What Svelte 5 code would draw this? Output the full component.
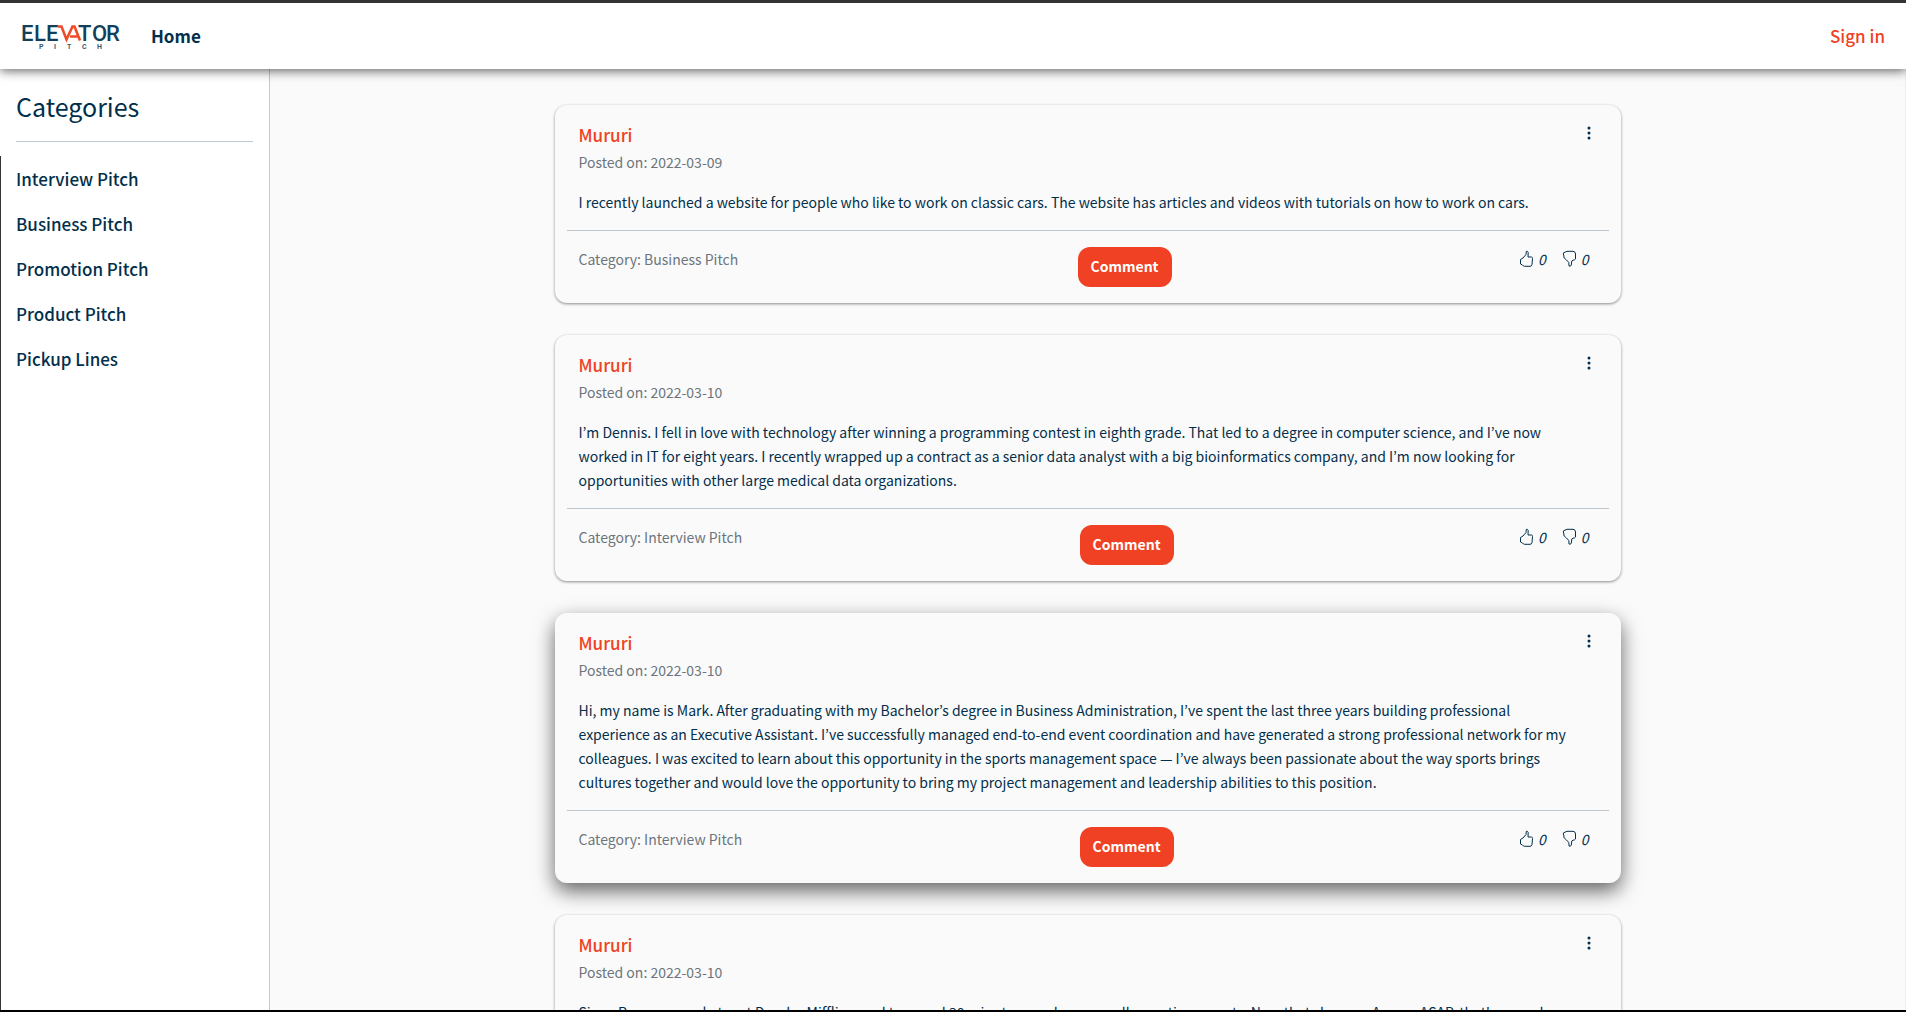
<script>
  const categories = ['Interview Pitch', 'Business Pitch', 'Promotion Pitch', 'Product Pitch', 'Pickup Lines'];

  const pitches = [
    {
      author: 'Mururi',
      date: '2022-03-09',
      category: 'Business Pitch',
      text: 'I recently launched a website for people who like to work on classic cars. The website has articles and videos with tutorials on how to work on cars.'
    },
    {
      author: 'Mururi',
      date: '2022-03-10',
      category: 'Interview Pitch',
      text: 'I’m Dennis. I fell in love with technology after winning a programming contest in eighth grade. That led to a degree in computer science, and I’ve now worked in IT for eight years. I recently wrapped up a contract as a senior data analyst with a big bioinformatics company, and I’m now looking for opportunities with other large medical data organizations.'
    },
    {
      author: 'Mururi',
      date: '2022-03-10',
      category: 'Interview Pitch',
      raised: true,
      text: 'Hi, my name is Mark. After graduating with my Bachelor’s degree in Business Administration, I’ve spent the last three years building professional experience as an Executive Assistant. I’ve successfully managed end-to-end event coordination and have generated a strong professional network for my colleagues. I was excited to learn about this opportunity in the sports management space — I’ve always been passionate about the way sports brings cultures together and would love the opportunity to bring my project management and leadership abilities to this position.'
    },
    {
      author: 'Mururi',
      date: '2022-03-10',
      category: 'Business Pitch',
      text: "Siena Rosen, a marketer at Dunder Mifflin, used to spend 30 minutes per day manually creating reports. Now that she uses AnswerASAP, that's gone down to five."
    }
  ];
</script>

<div class="page">
  <header>
    <a class="logo" href="#home" aria-label="Elevator Pitch">
      <svg width="112" height="40" viewBox="0 0 112 40">
        <text x="8 21 33" y="25">ELE</text>
        <text x="65 79 93" y="25">TOR</text>
        <path d="M45 10.500 H48.500 L53.500 23.500 L59.500 10.500 H61.500 L67 24.500 M57 20.500 H65" />
        <text class="sub" x="26 41 54 69 84" y="33">PITCH</text>
      </svg>
    </a>
    <a class="home" href="#home">Home</a>
    <a class="signin" href="#signin">Sign in</a>
  </header>

  <div class="columns">
    <aside>
      <h1>Categories</h1>
      <hr />
      <nav>
        {#each categories as category}
          <a href="#category">{category}</a>
        {/each}
      </nav>
    </aside>

    <main>
      <div class="feed">
        {#each pitches as pitch}
          <article class:raised={pitch.raised}>
            <div class="top">
              <h2>{pitch.author}</h2>
              <button class="dots" aria-label="More options">
                <svg width="16" height="16" viewBox="0 0 16 16">
                  <circle cx="8" cy="3" r="1.5" /><circle cx="8" cy="8" r="1.5" /><circle cx="8" cy="13" r="1.5" />
                </svg>
              </button>
            </div>
            <p class="muted">Posted on: {pitch.date}</p>
            <p class="text">{pitch.text}</p>
            <hr />
            <footer>
              <span class="muted">Category: {pitch.category}</span>
              <button class="comment">Comment</button>
              <div class="votes">
                <button aria-label="Like">
                  <svg width="16" height="18" viewBox="0 0 16 18">
                    <path d="M7.300 1.300 Q8.500 .8 9.200 2.500 L9 7 H12.500 Q13.700 7.300 13.500 8.500 L13 14.500 Q12.800 16.300 11 16.300 H5.500 Q4 16 3.500 15 L1.500 14 V9.500 L4 8 L7 4.500 Z" />
                  </svg>
                  <i>0</i>
                </button>
                <button aria-label="Dislike">
                  <svg width="16" height="18" viewBox="0 0 16 18">
                    <path d="M1.300 4 Q1 2.500 3 2.200 L5 1.300 H11 Q13.500 1.500 13.500 4 V9 Q13 10 11 10.200 L9.800 11 L9.300 15 Q8.500 17 7 16 L6.800 12.500 L4.500 10 L2.200 8 Q1.600 7 2 6 Z" />
                  </svg>
                  <i>0</i>
                </button>
              </div>
            </footer>
          </article>
        {/each}
      </div>
    </main>
  </div>
</div>

<style>
  :global(body) {
    background: #fafafa;
  }

  .page {
    display: flex;
    flex-direction: column;
    box-sizing: border-box;
    height: 100vh;
    overflow: hidden;
    border-top: 3px solid #353333;
    border-bottom: 2px solid #000;
    color: #022f4b;
    font-family: 'Noto Sans CJK KR', 'Noto Sans', sans-serif;
    font-size: 14px;
    line-height: 24px;
  }

  h1,
  h2,
  p,
  hr {
    margin: 0;
  }

  a {
    color: inherit;
    text-decoration: none;
  }

  button {
    padding: 0;
    border: 0;
    background: none;
    color: inherit;
    font: inherit;
    cursor: pointer;
  }

  hr {
    border: 0;
    border-top: 1px solid #bcc7cf;
  }

  header {
    display: flex;
    align-items: center;
    position: relative;
    z-index: 1;
    flex: none;
    box-sizing: border-box;
    height: 66px;
    padding: 0 21px 0 13px;
    background: #fff;
    box-shadow: 0 2px 10px rgba(0, 0, 0, 0.6);
    font-size: 17px;
  }

  .logo {
    display: flex;
  }

  .logo text {
    fill: #123f5a;
    font-family: Roboto, sans-serif;
    font-size: 22px;
    font-weight: 500;
  }

  .logo .sub {
    font-size: 7px;
    font-weight: 700;
    fill: #3a5c70;
  }

  .logo path {
    fill: none;
    stroke: #f04a2a;
    stroke-width: 2.6;
  }

  .home {
    margin-left: 26px;
    font-weight: 700;
  }

  .signin {
    margin-left: auto;
    color: #f04124;
    font-weight: 500;
  }

  .columns {
    display: flex;
    flex: 1;
    min-height: 0;
  }

  aside {
    position: relative;
    box-sizing: border-box;
    flex: none;
    width: 270px;
    padding: 19px 16px;
    border-right: 1px solid #c8c8c8;
    background: #fff;
  }

  aside::before {
    position: absolute;
    top: 87px;
    bottom: 0;
    left: 0;
    width: 1px;
    background: #353333;
    content: '';
  }

  h1 {
    margin-bottom: 17px;
    font-size: 25px;
    font-weight: 400;
    line-height: 36px;
  }

  nav {
    display: flex;
    flex-direction: column;
    gap: 16px;
    margin-top: 22px;
    font-size: 17px;
    font-weight: 500;
    line-height: 29px;
  }

  main {
    display: grid;
    flex: 1;
    grid-template-columns: 2fr 8fr 2fr;
    min-width: 0;
    overflow: hidden;
    border-right: 1px solid #eee;
  }

  .feed {
    display: flex;
    flex-direction: column;
    grid-column: 2;
    gap: 32px;
    min-width: 0;
    padding: 36px 12px;
  }

  article {
    flex: none;
    padding: 18px 12px 16px;
    border-radius: 12px;
    background: #fafafa;
    box-shadow: 0 1px 3px rgba(0, 0, 0, 0.45);
  }

  .raised {
    box-shadow: 0 8px 20px rgba(0, 0, 0, 0.6);
  }

  .top {
    display: flex;
    align-items: flex-start;
    justify-content: space-between;
    margin-bottom: 3px;
    padding: 0 12px;
  }

  h2 {
    color: #f04124;
    font-size: 17px;
    font-weight: 500;
    line-height: 24px;
  }

  .dots {
    display: flex;
    padding-top: 2px;
  }

  .dots svg {
    fill: currentColor;
  }

  p {
    padding: 0 12px;
  }

  .muted {
    color: #6c757d;
  }

  .text {
    margin: 16px 0;
    padding-right: 24px;
  }

  footer {
    display: flex;
    align-items: flex-start;
    justify-content: space-between;
    padding: 16px 12px 0;
  }

  .comment {
    height: 40px;
    padding: 0 13px 2px;
    border-radius: 12px;
    background: #f04124;
    color: #fff;
    font-weight: 700;
  }

  .votes {
    display: flex;
  }

  .votes button {
    display: flex;
    align-items: center;
    gap: 3px;
    padding: 0 8px;
  }

  .votes path {
    fill: none;
    stroke: currentColor;
  }
</style>
